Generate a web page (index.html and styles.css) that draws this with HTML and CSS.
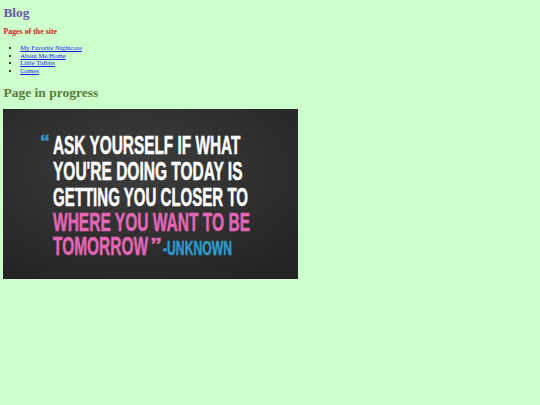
FILE: index.html
```html
<!DOCTYPE html>
<html>
<head>
<meta charset="utf-8">
<title>Blog</title>
<link rel="stylesheet" href="styles.css">
</head>
<body>
<h1 class="title">Blog</h1>
<h3 class="subtitle">Pages of the site</h3>
<ul class="pages">
  <li><a href="#">My Favorite Nightcore</a></li>
  <li><a href="#">About Me/Home</a></li>
  <li><a href="#">Little Tidbits</a></li>
  <li><a href="#">Games</a></li>
</ul>
<h2 class="progress">Page in progress</h2>
<div class="quote">
  <svg width="295" height="170" viewBox="0 0 295 170" xmlns="http://www.w3.org/2000/svg">
    <defs>
      <radialGradient id="bg" cx="0.45" cy="0.35" r="0.75">
        <stop offset="0" stop-color="#3d3d3d"/>
        <stop offset="1" stop-color="#242424"/>
      </radialGradient>
    </defs>
    <rect x="0" y="0" width="295" height="170" fill="url(#bg)"/>
    <g font-family="Liberation Sans, Arial, sans-serif" font-weight="bold" font-size="25" stroke-width="0.5">
      <text x="37" y="39" fill="#2f9bd0" stroke="#2f9bd0" font-size="18" textLength="10" lengthAdjust="spacingAndGlyphs">“</text>
      <text x="50" y="45" fill="#ffffff" stroke="#ffffff" textLength="187.5" lengthAdjust="spacingAndGlyphs">ASK YOURSELF IF WHAT</text>
      <text x="50" y="71" fill="#ffffff" stroke="#ffffff" textLength="189.5" lengthAdjust="spacingAndGlyphs">YOU'RE DOING TODAY IS</text>
      <text x="50" y="97" fill="#ffffff" stroke="#ffffff" textLength="195" lengthAdjust="spacingAndGlyphs">GETTING YOU CLOSER TO</text>
      <text x="50" y="122" fill="#e466b6" stroke="#e466b6" textLength="197" lengthAdjust="spacingAndGlyphs">WHERE YOU WANT TO BE</text>
      <text x="50" y="146" fill="#e466b6" stroke="#e466b6" textLength="95" lengthAdjust="spacingAndGlyphs">TOMORROW</text>
      <text x="147" y="142" fill="#e466b6" stroke="#e466b6" font-size="18" textLength="12" lengthAdjust="spacingAndGlyphs">”</text>
      <text x="160" y="146" fill="#2f9bd0" stroke="#2f9bd0" font-size="20" textLength="69" lengthAdjust="spacingAndGlyphs">-UNKNOWN</text>
    </g>
  </svg>
</div>
</body>
</html>
```
FILE: styles.css
```css
html {
  background: #ccffcc;
}
body {
  margin: 0;
  padding: 0 0 0 3.4px;
  font-family: "Liberation Serif", "Times New Roman", serif;
  font-size: 6.7px;
  line-height: 7.6px;
}
.title {
  margin: 4.7px 0 0 0;
  font-size: 13.4px;
  line-height: 15px;
  color: #6a55a6;
}
.subtitle {
  margin: 7.6px 0 0 0;
  font-size: 7.9px;
  line-height: 9px;
  color: #d41c1c;
}
.pages {
  margin: 8px 0 0 0;
  padding-left: 16.8px;
  line-height: 7.6px;
}
.pages a {
  color: #1a1aee;
}
.progress {
  margin: 10px 0 0 0;
  font-size: 13.5px;
  line-height: 15px;
  color: #5a7a3a;
}
.quote {
  margin-top: 9.4px;
  width: 295px;
  height: 170px;
}
.quote svg {
  display: block;
}
```
